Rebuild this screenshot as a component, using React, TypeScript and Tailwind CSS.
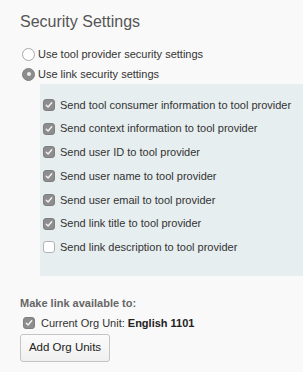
import React from "react";

const OPTIONS = [
    { label: "Send tool consumer information to tool provider", checked: true },
    { label: "Send context information to tool provider", checked: true },
    { label: "Send user ID to tool provider", checked: true },
    { label: "Send user name to tool provider", checked: true },
    { label: "Send user email to tool provider", checked: true },
    { label: "Send link title to tool provider", checked: true },
    { label: "Send link description to tool provider", checked: false },
];

function Check({ checked }: { checked: boolean }) {
    if (!checked) {
        return <span className="w-[12px] h-[12px] rounded-[3px] bg-white border border-[#b3b3b3] flex-shrink-0" />;
    }
    return (
        <span className="w-[12px] h-[12px] rounded-[3px] bg-[#8d8d8d] border border-[#7f7f7f] flex items-center justify-center flex-shrink-0">
            <svg width="8" height="8" viewBox="0 0 8 8" fill="none">
                <path d="M1.3 4.3 L3.1 6 L6.7 1.8" stroke="#f4f4f4" strokeWidth="1.4" strokeLinecap="round" strokeLinejoin="round" />
            </svg>
        </span>
    );
}

function Radio({ checked }: { checked: boolean }) {
    if (!checked) {
        return <span className="w-[13px] h-[13px] rounded-full bg-white border border-[#a8a8a8] flex-shrink-0" />;
    }
    return (
        <span className="w-[13px] h-[13px] rounded-full bg-[#8d8d8d] border border-[#7f7f7f] flex items-center justify-center flex-shrink-0">
            <span className="w-[4px] h-[4px] rounded-full bg-[#eeeeee]" />
        </span>
    );
}

export default function App() {
    return (
        <div className="w-[303px] h-[372px] overflow-hidden bg-[#f9f9f9] pl-[20px] pt-[12px] font-['Liberation_Sans',Arial,sans-serif] text-[#333]">
            {/* Heading */}
            <h2 className="text-[16px] leading-[20px] text-[#555]">Security Settings</h2>

            {/* Radios */}
            <div className="mt-[12px] pl-[2px]">
                <label className="flex items-center gap-[3px] h-[20px] text-[11px]">
                    <Radio checked={false} />
                    <span>Use tool provider security settings</span>
                </label>
                <label className="flex items-center gap-[3px] h-[20px] text-[11px]">
                    <Radio checked={true} />
                    <span>Use link security settings</span>
                </label>
            </div>

            {/* Link options panel */}
            <div className="ml-[20px] h-[192px] pt-[9px] pl-[3px] bg-[#e6eef0]">
                {OPTIONS.map((o) => (
                    <label key={o.label} className="flex items-center gap-[5px] h-[23.75px] text-[11px] whitespace-nowrap">
                        <Check checked={o.checked} />
                        <span>{o.label}</span>
                    </label>
                ))}
            </div>

            {/* Availability */}
            <p className="mt-[20px] text-[11px] leading-[14px] font-bold text-[#666]">Make link available to:</p>
            <label className="mt-[6px] pl-[3px] flex items-center gap-[6px] h-[14px] text-[11px]">
                <Check checked={true} />
                <span>
                    Current Org Unit: <b className="text-[#222]">English 1101</b>
                </span>
            </label>
            <button className="mt-[4px] w-[90px] h-[28px] rounded-[3px] border border-[#c4c4c4] bg-gradient-to-b from-[#fbfbfb] to-[#f0f0f0] text-[11.5px] text-[#222]">
                Add Org Units
            </button>
        </div>
    );
}
